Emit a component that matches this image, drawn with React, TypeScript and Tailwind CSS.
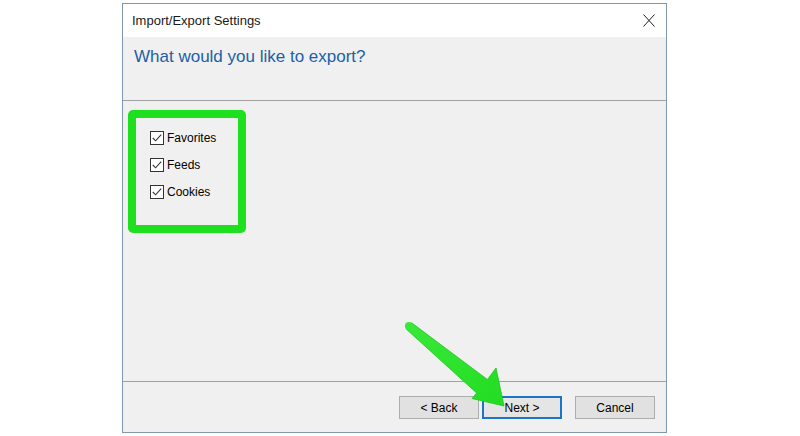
import React from 'react';

const font = { fontFamily: '"Liberation Sans", Arial, sans-serif' };

const items = ['Favorites', 'Feeds', 'Cookies'];

const CheckBox = () => (
  <span className="w-[14px] h-[14px] border border-[#333333] bg-white flex items-center justify-center shrink-0">
    <svg width="12" height="12" viewBox="0 0 12 12">
      <path d="M1.8 6 L4.6 8.8 L10.2 2.6" fill="none" stroke="#333333" strokeWidth="1.1" />
    </svg>
  </span>
);

const Button = ({ label, primary }: { label: string; primary?: boolean }) => (
  <button
    className={
      primary
        ? 'w-[80px] h-[23px] bg-[#e5e5e5] border-2 border-[#1a74c8] text-[12px] text-black flex items-center justify-center'
        : 'w-[80px] h-[23px] bg-[#e1e1e1] border border-[#adadad] text-[12px] text-black flex items-center justify-center'
    }
  >
    {label}
  </button>
);

export default function App() {
  return (
    <div className="w-[800px] h-[436px] bg-white relative overflow-hidden" style={font}>
      <div className="ml-[122px] mt-[3px] w-[545px] h-[430px] border border-[#7f98ae] flex flex-col bg-[#f0f0f0]">
        {/* title bar */}
        <div className="h-[33px] bg-white flex items-center justify-between pl-[9px] pr-[11px] shrink-0">
          <span className="text-[13px] text-[#1a1a1a]">Import/Export Settings</span>
          <svg width="12" height="13" viewBox="0 0 12 13">
            <path d="M0.5 0.5 L11.5 12.5 M11.5 0.5 L0.5 12.5" stroke="#222222" strokeWidth="1" />
          </svg>
        </div>

        {/* header */}
        <div className="h-[64px] border-b border-[#a0a0a0] pl-[11px] pt-[10px] shrink-0">
          <h1 className="text-[17px] leading-[20px] text-[#2160a8]">What would you like to export?</h1>
        </div>

        {/* options */}
        <div className="flex-1 pl-[5px] pt-[9px]">
          <div className="w-[118px] h-[123px] border-[8px] border-[#1fe01f] rounded-[5px] pl-[14px] pt-[13px] flex flex-col gap-[13px]">
            {items.map((item) => (
              <label key={item} className="flex items-center gap-[3px] h-[14px] text-[12px] text-black">
                <CheckBox />
                <span>{item}</span>
              </label>
            ))}
          </div>
        </div>

        {/* footer */}
        <div className="h-[51px] border-t border-[#a0a0a0] flex justify-end items-start pt-[14px] pr-[11px] shrink-0">
          <div className="flex gap-[3px]">
            <Button label="< Back" />
            <Button label="Next >" primary />
          </div>
          <div className="ml-[13px]">
            <Button label="Cancel" />
          </div>
        </div>
      </div>

      {/* pointer arrow */}
      <svg className="absolute left-0 top-0" width="800" height="436" viewBox="0 0 800 436">
        <defs>
          <linearGradient id="arrowFill" x1="0" y1="0" x2="1" y2="1">
            <stop offset="0" stopColor="#3ae83a" />
            <stop offset="1" stopColor="#22dc22" />
          </linearGradient>
        </defs>
        <polygon
          points="406.4,329.2 476.6,393 472,398.5 504,406 496,368 487.4,379.5 411.6,322.8"
          fill="url(#arrowFill)"
          stroke="#1cc81c"
          strokeWidth="0.8"
          strokeLinejoin="round"
        />
        <circle cx="409" cy="326" r="4.1" fill="#3ae83a" />
      </svg>
    </div>
  );
}
